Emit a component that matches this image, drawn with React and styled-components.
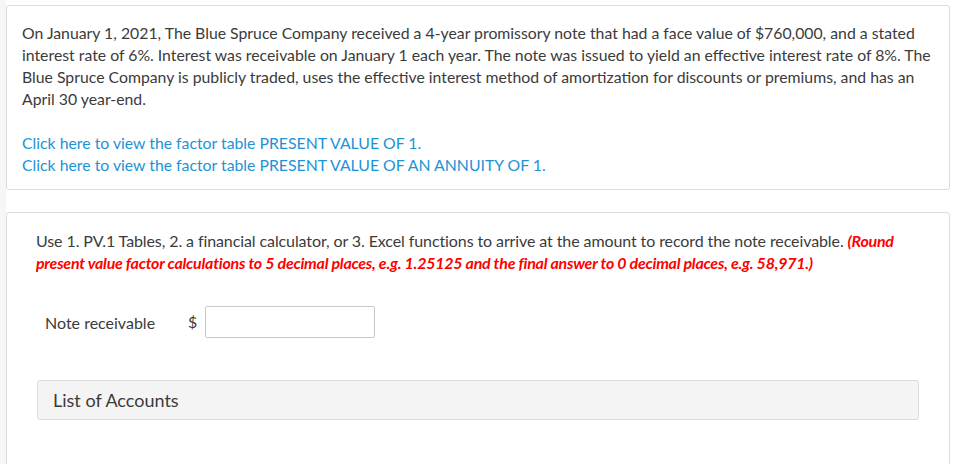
import React from 'react';
import styled, { createGlobalStyle } from 'styled-components';

const GlobalStyle = createGlobalStyle`
  body {
    margin: 0;
    background: #fff;
    font-family: Lato, "Open Sans", "Liberation Sans", sans-serif;
    color: #3b3b3b;
  }
`;

const Page = styled.div`
  border-left: 6px solid #f6f6f6;
  padding: 5px 3px 0 0;
`;

const Card = styled.div`
  border: 1px solid #dcdcdc;
  border-radius: 3px;
  background: #fff;
  padding: ${(p) => p.$pad};
  margin-top: ${(p) => p.$gap || '0'};
`;

const Para = styled.p`
  margin: 0 0 22px;
  font-size: 15.8px;
  line-height: 22px;
`;

const LinkList = styled.div`
  display: flex;
  flex-direction: column;
`;

const FactorLink = styled.a`
  color: #1d93d6;
  font-size: 15.8px;
  line-height: 22px;
  text-decoration: none;
  cursor: pointer;
`;

const Instruction = styled.p`
  margin: 0;
  font-size: 16px;
  line-height: 21.7px;
  letter-spacing: -0.1px;
`;

const Note = styled.em`
  color: #f00;
  font-weight: 700;
  letter-spacing: -0.25px;
`;

const FieldRow = styled.div`
  display: flex;
  align-items: center;
  margin: 33px 0 0 9px;
`;

const FieldLabel = styled.span`
  width: 143px;
  font-size: 16px;
`;

const Currency = styled.span`
  width: 17px;
  font-size: 16px;
  margin-top: -2px;
`;

const AmountInput = styled.input`
  width: 170px;
  height: 32px;
  box-sizing: border-box;
  border: 1px solid #c9c9c9;
  border-radius: 2px;
  padding: 0 6px;
  font: inherit;
  font-size: 15px;
  outline: none;
`;

const AccountsBox = styled.div`
  margin: 42px 1px 0 1px;
  height: 40px;
  box-sizing: border-box;
  display: flex;
  align-items: center;
  padding-left: 15px;
  background: #f4f4f4;
  border: 1px solid #dcdcdc;
  border-radius: 3px;
  font-size: 18px;
  color: #3b3b3b;
`;

export default function App() {
  return (
    <>
      <GlobalStyle />
      <Page>
        <Card $pad="16px 15px 13px">
          <Para>
            On January 1, 2021, The Blue Spruce Company received a 4-year promissory note that had a face
            value of $760,000, and a stated interest rate of 6%. Interest was receivable on January 1 each
            year. The note was issued to yield an effective interest rate of 8%. The Blue Spruce Company is
            publicly traded, uses the effective interest method of amortization for discounts or premiums,
            and has an April 30 year-end.
          </Para>
          <LinkList>
            <FactorLink>Click here to view the factor table PRESENT VALUE OF 1.</FactorLink>
            <FactorLink>Click here to view the factor table PRESENT VALUE OF AN ANNUITY OF 1.</FactorLink>
          </LinkList>
        </Card>
        <Card $pad="17px 29px 60px" $gap="22px">
          <Instruction>
            Use 1. PV.1 Tables, 2. a financial calculator, or 3. Excel functions to arrive at the amount to
            record the note receivable.{' '}
            <Note>
              (Round present value factor calculations to 5 decimal places, e.g. 1.25125 and the final
              answer to 0 decimal places, e.g. 58,971.)
            </Note>
          </Instruction>
          <FieldRow>
            <FieldLabel>Note receivable</FieldLabel>
            <Currency>$</Currency>
            <AmountInput type="text" />
          </FieldRow>
          <AccountsBox>List of Accounts</AccountsBox>
        </Card>
      </Page>
    </>
  );
}
